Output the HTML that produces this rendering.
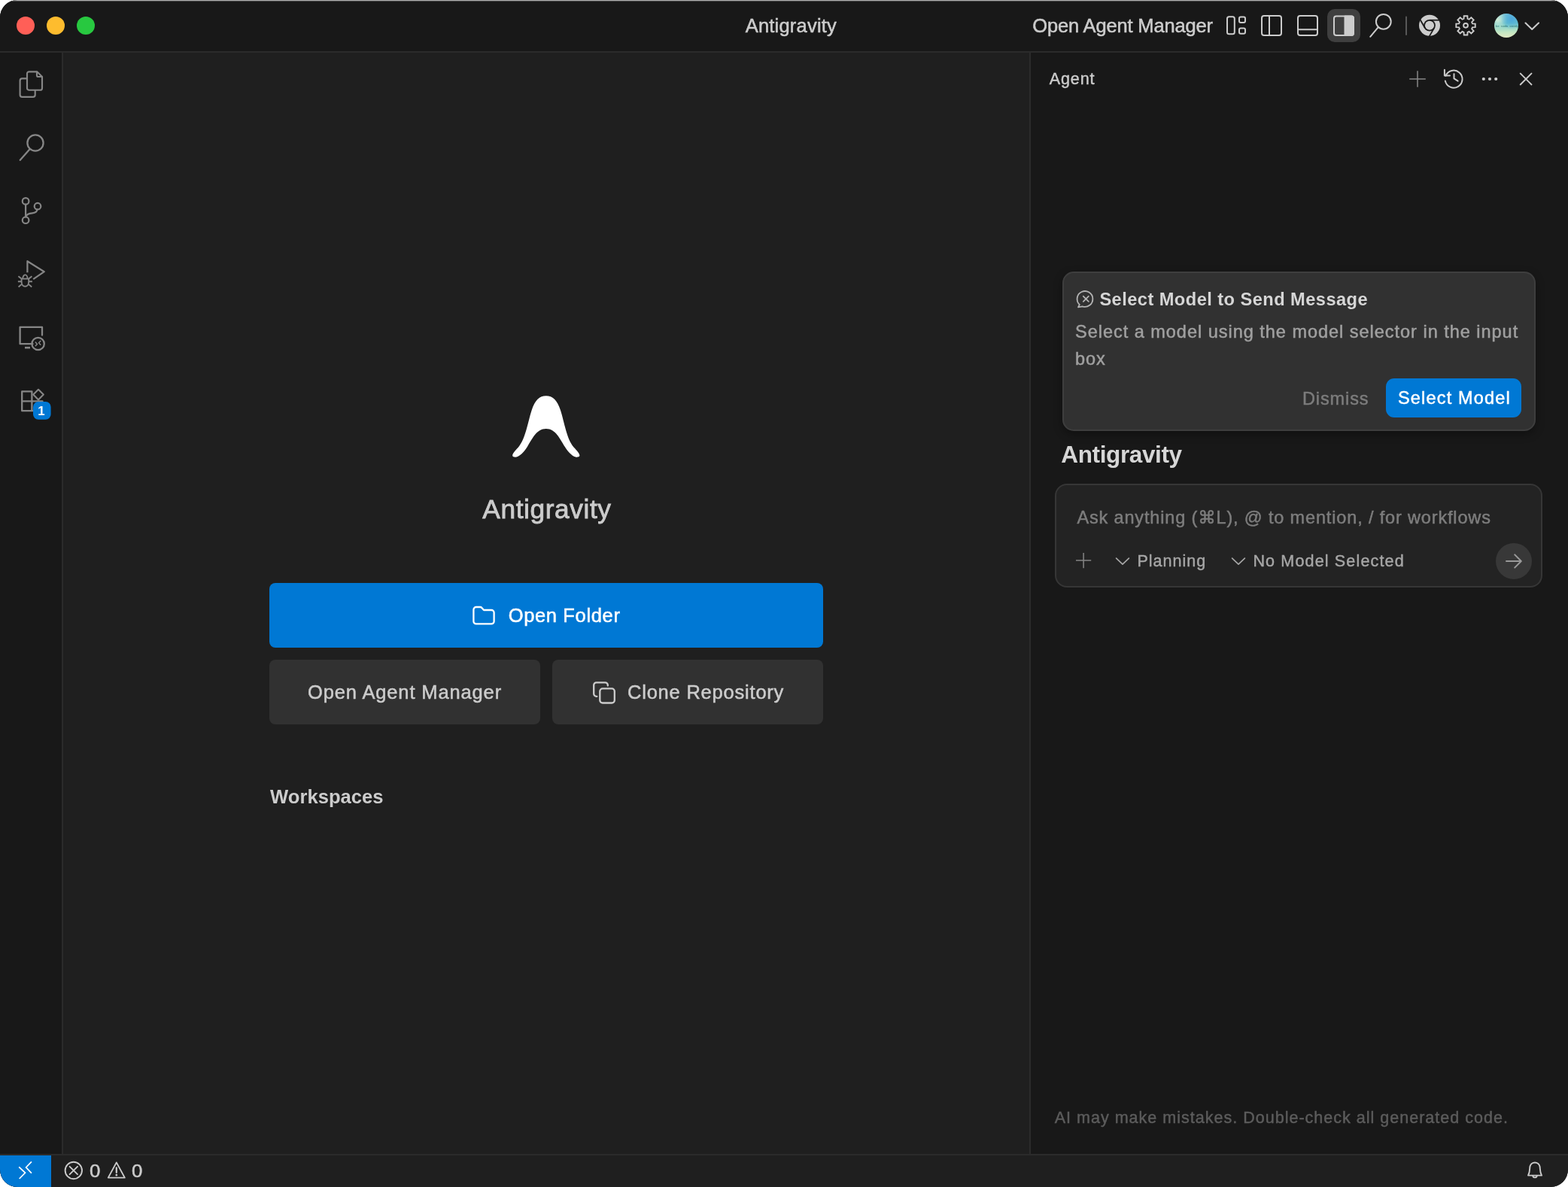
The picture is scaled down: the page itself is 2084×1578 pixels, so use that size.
<!DOCTYPE html>
<html lang="en">
<head>
<meta charset="utf-8">
<title>Antigravity</title>
<style>
html,body{margin:0;padding:0;background:#ffffff;}
body{width:2084px;height:1578px;overflow:hidden;font-family:"Liberation Sans","DejaVu Sans",sans-serif;}
#win{position:absolute;left:0;top:0;width:2084px;height:1578px;border-radius:23px;overflow:hidden;background:#1f1f1f;}
#win div,#win span,#win svg{position:absolute;box-sizing:border-box;}
.t{white-space:nowrap;line-height:1;}
#titlebar{left:0;top:0;width:2084px;height:70px;background:#181818;border-bottom:2px solid #2b2b2b;}
#activity{left:0;top:70px;width:84px;height:1464px;background:#181818;border-right:2px solid #2b2b2b;}
#editor{left:84px;top:70px;width:1284px;height:1464px;background:#1f1f1f;}
#agent{left:1368px;top:70px;width:716px;height:1464px;background:#181818;border-left:2px solid #2b2b2b;}
#status{left:0;top:1534px;width:2084px;height:44px;background:#1f1f1f;border-top:2px solid #2b2b2b;}
#remote{left:0;top:1536px;width:68px;height:42px;background:#0078d4;}
#topedge{left:0;top:0;width:2084px;height:2px;background:linear-gradient(#b0b0b0,#b0b0b0) 0 0/100% 1px no-repeat,linear-gradient(#4a4a4a,#4a4a4a) 0 1px/100% 1px no-repeat;pointer-events:none;}
#btn-open{left:358px;top:775px;width:736px;height:86px;background:#0078d4;border-radius:8px;}
#btn-oam{left:358px;top:877px;width:360px;height:86px;background:#313131;border-radius:8px;}
#btn-clone{left:734px;top:877px;width:360px;height:86px;background:#313131;border-radius:8px;}
#layout-active{left:1764px;top:12px;width:44px;height:44px;background:#3f3f3f;border-radius:10px;}
#notif{left:1412px;top:361px;width:629px;height:212px;background:#313131;border:2px solid #3e3e3e;border-radius:15px;box-shadow:0 4px 12px rgba(0,0,0,0.35);}
#btn-select{left:1842px;top:503px;width:180px;height:52px;background:#0078d4;border-radius:11px;}
#inputbox{left:1402px;top:643px;width:648px;height:138px;background:#232323;border:2px solid #363636;border-radius:16px;}
#send{left:1988px;top:722px;width:48px;height:48px;border-radius:24px;background:#383838;}
#avatar{left:1985.8px;top:18px;width:32.2px;height:32.2px;border-radius:50%;background:radial-gradient(circle at 72% 22%,rgba(74,166,220,0.95) 0,rgba(74,166,220,0) 42%),radial-gradient(circle at 14% 26%,rgba(214,238,214,0.95) 0,rgba(214,238,214,0) 36%),linear-gradient(to bottom,#7cc6d6 0%,#68c4cc 38%,#9ad8c8 58%,#c4e6c2 78%,#e2e8c2 100%);overflow:hidden;}
#avatar span{left:2px;top:15.8px;font-size:3.9px;line-height:1;color:#2f7674;opacity:0.75;white-space:nowrap;letter-spacing:0;font-weight:700;font-family:"Liberation Mono",monospace;}
#texts{left:0;top:0;width:2084px;height:1578px;will-change:transform;}
#icons{left:0;top:0;width:2084px;height:1578px;pointer-events:none;}
</style>
</head>
<body>
<div id="win">
  <div id="titlebar"></div>
  <div id="activity"></div>
  <div id="editor"></div>
  <div id="agent"></div>
  <div id="status"></div>
  <div id="remote"></div>
  <div id="btn-open"></div>
  <div id="btn-oam"></div>
  <div id="btn-clone"></div>
  <div id="layout-active"></div>
  <div id="notif"></div>
  <div id="btn-select"></div>
  <div id="inputbox"></div>
  <div id="send"></div>
  <div id="avatar"><span>be soda candy</span></div>
<svg id="icons" width="2084" height="1578" viewBox="0 0 2084 1578" fill="none" stroke-linecap="round" stroke-linejoin="round">
<!-- traffic lights -->
<g stroke="none">
<circle cx="34" cy="34" r="12" fill="#ff5f57"/>
<circle cx="74" cy="34" r="12" fill="#febc2e"/>
<circle cx="114" cy="34" r="12" fill="#28c840"/>
</g>
<!-- titlebar icons -->
<g stroke="#cccccc" stroke-width="2">
<rect x="1631" y="22.2" width="9.8" height="23" rx="2.5"/>
<rect x="1647" y="22.6" width="8" height="7.4" rx="2"/>
<rect x="1647" y="37.4" width="8" height="7.4" rx="2"/>
<rect x="1677" y="21" width="26" height="26" rx="3"/>
<path d="M1687 21V47"/>
<rect x="1725" y="21" width="26" height="26" rx="3"/>
<path d="M1725 39.3H1751"/>
<rect x="1773" y="21.5" width="26" height="25.5" rx="3"/>
<path d="M1787.5 21.5h8.5a3 3 0 0 1 3 3v19.5a3 3 0 0 1 -3 3h-8.5z" fill="#cccccc"/>
<circle cx="1838.8" cy="28.8" r="9.9"/>
<path d="M1831.8 36.2L1821.2 48.8"/>
<path d="M2027.5 30.5L2036.2 39L2045 30.5"/>
</g>
<path d="M1869 22.5V46" stroke="#585858" stroke-width="2"/>
<!-- chrome -->
<g stroke="none">
<circle cx="1900" cy="33.75" r="14" fill="#cccccc"/>
<circle cx="1900" cy="33.75" r="7.85" fill="#181818"/>
<circle cx="1900" cy="33.75" r="6.1" fill="#cccccc"/>
</g>
<g stroke="#181818" stroke-width="1.75" stroke-linecap="butt">
<path d="M1900 26.75H1914"/>
<path d="M1893.94 37.25L1887 25.2"/>
<path d="M1906.06 37.25L1899.2 49.1"/>
</g>
<!-- gear -->
<g stroke="#cccccc" stroke-width="1.9" stroke-linejoin="miter">
<circle cx="1948.03" cy="33.87" r="2.9"/>
<path d="M1945.50 24.92L1945.72 21.18L1950.34 21.18L1950.56 24.92L1952.57 25.76L1955.37 23.26L1958.64 26.53L1956.14 29.33L1956.98 31.34L1960.72 31.56L1960.72 36.18L1956.98 36.40L1956.14 38.41L1958.64 41.21L1955.37 44.48L1952.57 41.98L1950.56 42.82L1950.34 46.56L1945.72 46.56L1945.50 42.82L1943.49 41.98L1940.69 44.48L1937.42 41.21L1939.92 38.41L1939.08 36.40L1935.34 36.18L1935.34 31.56L1939.08 31.34L1939.92 29.33L1937.42 26.53L1940.69 23.26L1943.49 25.76Z"/>
</g>
<!-- activity bar -->
<g stroke="#868686" stroke-width="2.3">
<!-- files -->
<g stroke-width="2.15">
<path d="M49.2 95.3H38.6a2.6 2.6 0 0 0 -2.6 2.6v19.3a2.6 2.6 0 0 0 2.6 2.6h14.8a2.6 2.6 0 0 0 2.6 -2.6V102z"/>
<path d="M49 95.8V100.2a1.8 1.8 0 0 0 1.8 1.8H55.6"/>
<path d="M35.6 104.4H29.4a2.8 2.8 0 0 0 -2.8 2.8V126a2.8 2.8 0 0 0 2.8 2.8H43.9a2.8 2.8 0 0 0 2.8 -2.8V120.4"/>
</g>
<!-- search -->
<circle cx="47" cy="190" r="10.6"/>
<path d="M39.8 198L26.8 212.8"/>
<!-- scm -->
<g stroke-width="2.2">
<circle cx="34.1" cy="267.4" r="4.3"/>
<circle cx="34.1" cy="292.7" r="4.3"/>
<circle cx="50" cy="274.2" r="4.3"/>
<path d="M34.1 271.8V288.3"/>
<path d="M49.4 278.6C49 282.2 46.2 283 43 283.3C39 283.6 35.2 284.6 34.3 288"/>
</g>
<!-- debug -->
<g stroke-linejoin="round" stroke-linecap="butt">
<path d="M36.4 362.2V347.2L58.8 361.2L44.2 371.2" stroke-width="2.2"/>
<g stroke-width="1.9">
<path d="M28.6 370.6H38.2V374.6C38.2 378.4 36 380.8 33.4 380.8C30.8 380.8 28.6 378.4 28.6 374.6Z" stroke-linejoin="round"/>
<path d="M30.2 370.6a3.2 5.2 0 0 1 6.4 0"/>
<path d="M24.4 367.2L28.2 370.3M42.4 367.2L38.6 370.3M23.9 374.3H28.4M42.9 374.3H38.4M24.6 381.5L28.8 377.9M42.2 381.5L38 377.9"/>
</g>
</g>
<!-- remote explorer -->
<path d="M43.5 457.2H26.6V434.8H56V445.6"/>
<path d="M33 462.2H40" stroke-width="2.6" stroke-linecap="butt"/>
<circle cx="50.6" cy="457" r="8.2"/>
<path d="M47.2 455L49.5 457.4L47.2 459.8M53.8 453.4L51.5 455.8L53.8 458.2" stroke-width="1.5"/>
<!-- extensions -->
<path d="M29.2 520.4H42.4V546.2H29.2zM29.2 533.3H56.4V546.2H42.4"/>
<path d="M51 517.8L57.8 524.6L51 531.4L44.2 524.6z" stroke-width="2.1"/>
</g>
<rect x="44" y="534" width="23.6" height="23.8" rx="7" fill="#0078d4" stroke="none"/>
<!-- agent header -->
<g stroke="#868686" stroke-width="1.5" stroke-linecap="butt">
<path d="M1873.2 105H1894.8M1884 94.2V115.8"/>
</g>
<g stroke="#cccccc" stroke-width="2">
<path d="M1921.4 100.8A11.5 11.5 0 1 1 1920.8 107.4"/>
<path d="M1919.9 92.8V100.6H1927"/>
<path d="M1932.5 98.2V104.4L1937.6 107.6"/>
<path d="M2020.2 97.2L2036 113M2036 97.2L2020.2 113" stroke-width="1.9" stroke-linecap="butt"/>
</g>
<g stroke="none" fill="#cccccc">
<circle cx="1971.8" cy="105" r="2.1"/>
<circle cx="1980" cy="105" r="2.1"/>
<circle cx="1988.2" cy="105" r="2.1"/>
</g>
<!-- logo -->
<path stroke="none" fill="#ffffff" d="M683.5 607.6C678.5 606.5 682 602 689 594.5C698.4 583.5 701.6 561 706.6 545.5C711 532 717 526.2 725.8 526.2C734.6 526.2 740.6 532 745 545.5C750 561 753.2 583.5 762.5 594.5C769.5 602 773 606.5 768 607.6C763 608.7 756.5 603 750.8 594C744 583.2 738.5 570 725.8 570C713 570 707.5 583.2 700.8 594C695 603 688.5 608.7 683.5 607.6Z"/>
<!-- folder icon -->
<g stroke="#ffffff" stroke-width="2.3">
<path d="M629.4 811v-0.5a3.5 3.5 0 0 1 3.5 -3.5h5.4a2.6 2.6 0 0 1 2 .9l2.7 3.1h10.1a3.5 3.5 0 0 1 3.5 3.5v11.4a3.5 3.5 0 0 1 -3.5 3.5h-20.2a3.5 3.5 0 0 1 -3.5 -3.5z"/>
</g>
<!-- clone icon -->
<g stroke="#cccccc" stroke-width="2.3">
<rect x="797.3" y="915.4" width="19.5" height="19.1" rx="3.6"/>
<path d="M793.4 925.8h-0.7a3.5 3.5 0 0 1 -3.5 -3.5v-11.5a3.5 3.5 0 0 1 3.5 -3.5h11.6a3.5 3.5 0 0 1 3.5 3.5v0.7"/>
</g>
<!-- notif icon -->
<g stroke="#b4b4b4" stroke-width="1.8" transform="translate(1.4 0.4)">
<path d="M1433.4 404.6A10.4 10.4 0 1 1 1437.2 406.9L1431.6 408z"/>
<path d="M1438.4 393.4L1445.4 400.4M1445.4 393.4L1438.4 400.4"/>
</g>
<!-- input row -->
<g stroke="#858585" stroke-width="1.5" stroke-linecap="butt">
<path d="M1430 745H1450.2M1440.1 735V755.2"/>
</g>
<g stroke="#a6a6a6" stroke-width="1.7">
<path d="M1483.6 742.2L1492 750.2L1500.4 742.2"/>
<path d="M1637.6 742.2L1646 750.2L1654.4 742.2"/>
</g>
<g stroke="#9a9a9a" stroke-width="2">
<path d="M2002 746H2021.5M2013.2 737.4L2021.8 746L2013.2 754.6"/>
</g>
<!-- status bar -->
<g stroke="#ffffff" stroke-width="1.7" stroke-linecap="butt" stroke-linejoin="miter">
<path d="M25.2 1551.3L33.5 1559.1L25.7 1567"/>
<path d="M41.9 1544.4L34.6 1551.9L41.9 1559.7"/>
</g>
<g stroke="#cccccc" stroke-width="1.9">
<circle cx="97.8" cy="1556" r="11.2"/>
<path d="M92.6 1550.8L103 1561.2M103 1550.8L92.6 1561.2"/>
<path d="M154.8 1545.4L165.8 1565.6H143.8z"/>
<path d="M154.8 1552.4V1558.8" stroke-width="2.2"/>
<circle cx="154.8" cy="1562.2" r="0.6" stroke-width="1.6"/>
<path d="M2031 1562.6C2033.6 1558 2033 1553.5 2033.4 1551A6.7 6.7 0 0 1 2046.6 1551C2047 1553.5 2046.4 1558 2049 1562.6z"/>
<path d="M2037.2 1563.2a2.9 2.9 0 0 0 5.6 0"/>
</g>
</svg>

<div id="texts">
<span class="t" id="t_title" style="left:990.70px;top:22.05px;font-size:25.48px;font-weight:400;-webkit-text-stroke:0.52px #cccccc;color:#cccccc;letter-spacing:0.220px">Antigravity</span>
<span class="t" id="t_oam" style="left:1372.30px;top:22.45px;font-size:25.48px;font-weight:400;-webkit-text-stroke:0.52px #cccccc;color:#cccccc;letter-spacing:-0.140px">Open Agent Manager</span>
<span class="t" id="t_agent" style="left:1394.80px;top:93.77px;font-size:21.56px;font-weight:400;-webkit-text-stroke:0.44px #cccccc;color:#cccccc;letter-spacing:0.850px">Agent</span>
<span class="t" id="t_logo" style="left:641.30px;top:659.16px;font-size:35.28px;font-weight:400;-webkit-text-stroke:0.83px #cccccc;color:#cccccc;letter-spacing:0.600px">Antigravity</span>
<span class="t" id="t_of" style="left:675.70px;top:806.17px;font-size:25.48px;font-weight:400;-webkit-text-stroke:0.52px #ffffff;color:#ffffff;letter-spacing:0.660px">Open Folder</span>
<span class="t" id="t_oam2" style="left:409.00px;top:908.25px;font-size:25.48px;font-weight:400;-webkit-text-stroke:0.52px #cccccc;color:#cccccc;letter-spacing:0.882px">Open Agent Manager</span>
<span class="t" id="t_clone" style="left:834.00px;top:908.25px;font-size:25.48px;font-weight:400;-webkit-text-stroke:0.52px #cccccc;color:#cccccc;letter-spacing:0.800px">Clone Repository</span>
<span class="t" id="t_ws" style="left:359.00px;top:1046.82px;font-size:25.61px;font-weight:700;color:#cccccc;letter-spacing:0.019px">Workspaces</span>
<span class="t" id="t_ntitle" style="left:1461.40px;top:387.39px;font-size:23.64px;font-weight:700;color:#d6d6d6;letter-spacing:0.453px">Select Model to Send Message</span>
<span class="t" id="t_nb1" style="left:1429.00px;top:430.31px;font-size:23.52px;font-weight:400;-webkit-text-stroke:0.48px #a0a0a0;color:#a0a0a0;letter-spacing:0.973px">Select a model using the model selector in the input</span>
<span class="t" id="t_nb2" style="left:1429.00px;top:466.31px;font-size:23.52px;font-weight:400;-webkit-text-stroke:0.48px #a0a0a0;color:#a0a0a0;letter-spacing:0.973px">box</span>
<span class="t" id="t_dismiss" style="left:1730.90px;top:518.51px;font-size:23.52px;font-weight:400;-webkit-text-stroke:0.48px #7c7c7c;color:#7c7c7c;letter-spacing:0.900px">Dismiss</span>
<span class="t" id="t_selm" style="left:1858.00px;top:518.43px;font-size:23.52px;font-weight:400;-webkit-text-stroke:0.48px #ffffff;color:#ffffff;letter-spacing:1.166px">Select Model</span>
<span class="t" id="t_agname" style="left:1410.30px;top:588.62px;font-size:31.52px;font-weight:700;color:#d6d6d6;letter-spacing:-0.380px">Antigravity</span>
<span class="t" id="t_ph" style="left:1431.40px;top:676.91px;font-size:23.52px;font-weight:400;-webkit-text-stroke:0.48px #7d7d7d;color:#7d7d7d;letter-spacing:0.840px">Ask anything (⌘L), @ to mention, / for workflows</span>
<span class="t" id="t_plan" style="left:1511.40px;top:735.27px;font-size:21.56px;font-weight:400;-webkit-text-stroke:0.44px #a6a6a6;color:#a6a6a6;letter-spacing:1.000px">Planning</span>
<span class="t" id="t_nomodel" style="left:1665.40px;top:735.27px;font-size:21.56px;font-weight:400;-webkit-text-stroke:0.44px #a6a6a6;color:#a6a6a6;letter-spacing:1.137px">No Model Selected</span>
<span class="t" id="t_foot" style="left:1401.70px;top:1474.75px;font-size:21.56px;font-weight:400;-webkit-text-stroke:0.44px #5c5c5c;color:#5c5c5c;letter-spacing:0.991px">AI may make mistakes. Double-check all generated code.</span>
<span class="t" id="t_err0" style="left:119.20px;top:1545.71px;font-size:23.52px;font-weight:400;-webkit-text-stroke:0.48px #cccccc;color:#cccccc;letter-spacing:0.000px;transform:scaleX(1.1);transform-origin:0 0">0</span>
<span class="t" id="t_warn0" style="left:175.00px;top:1545.71px;font-size:23.52px;font-weight:400;-webkit-text-stroke:0.48px #cccccc;color:#cccccc;letter-spacing:0.000px;transform:scaleX(1.1);transform-origin:0 0">0</span>
<span class="t" id="t_badge" style="left:50.20px;top:538.73px;font-size:16.75px;font-weight:700;color:#ffffff;letter-spacing:0.000px">1</span>
</div>
  <div id="topedge"></div>
</div>
</body>
</html>
